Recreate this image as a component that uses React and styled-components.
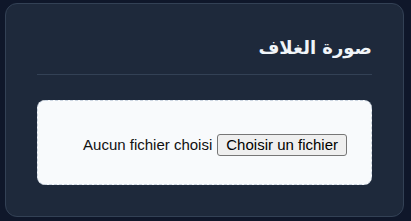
import React from 'react';
import styled, {createGlobalStyle} from "styled-components";

const GlobalStyle = createGlobalStyle`
    html, body {
        margin: 0;
        padding: 0;
        background: #0f172a;
    }
    body {
        font-family: "Liberation Sans", Arial, sans-serif;
    }
`;

const Page = styled.div`
    padding: 3px 7px 4px 5px;
`;

const Card = styled.section`
    direction: rtl;
    background: #1e293b;
    border: 1px solid #334155;
    border-radius: 12px;
    padding: 28px 31px 31px;
`;

const Header = styled.div`
    border-bottom: 1px solid #334155;
    padding-bottom: 10px;
    margin-bottom: 25px;
`;

const Title = styled.h3`
    margin: 0;
    font-family: "DejaVu Sans", sans-serif;
    font-size: 18px;
    font-weight: 700;
    line-height: 32px;
    color: #f1f5f9;
`;

const DropZone = styled.div`
    background: #f8fafc;
    border: 1px dashed #cbd5e1;
    border-radius: 8px;
    padding: 33px 24px 28px;
    display: flex;
    justify-content: flex-start;
`;

const FileField = styled.label`
    direction: ltr;
    display: flex;
    align-items: center;
    gap: 5px;
    font-family: "Liberation Sans", Arial, sans-serif;
    font-size: 15px;
    color: #111;
    cursor: pointer;

    input {
        display: none;
    }
`;

const FileName = styled.span`
    line-height: 22px;
`;

const PickButton = styled.span`
    display: inline-block;
    background: #efefef;
    border: 1px solid #767676;
    border-radius: 3px;
    padding: 1px 8px;
    line-height: 18px;
    color: #000;
`;

const CoverUpload = () => {
    return (
        <Card>
            <Header>
                <Title>صورة الغلاف</Title>
            </Header>
            <DropZone>
                <FileField>
                    <input type="file" accept="image/*"/>
                    <FileName>Aucun fichier choisi</FileName>
                    <PickButton>Choisir un fichier</PickButton>
                </FileField>
            </DropZone>
        </Card>
    );
};

const App = () => (
    <Page>
        <GlobalStyle/>
        <CoverUpload/>
    </Page>
);

export default App;
